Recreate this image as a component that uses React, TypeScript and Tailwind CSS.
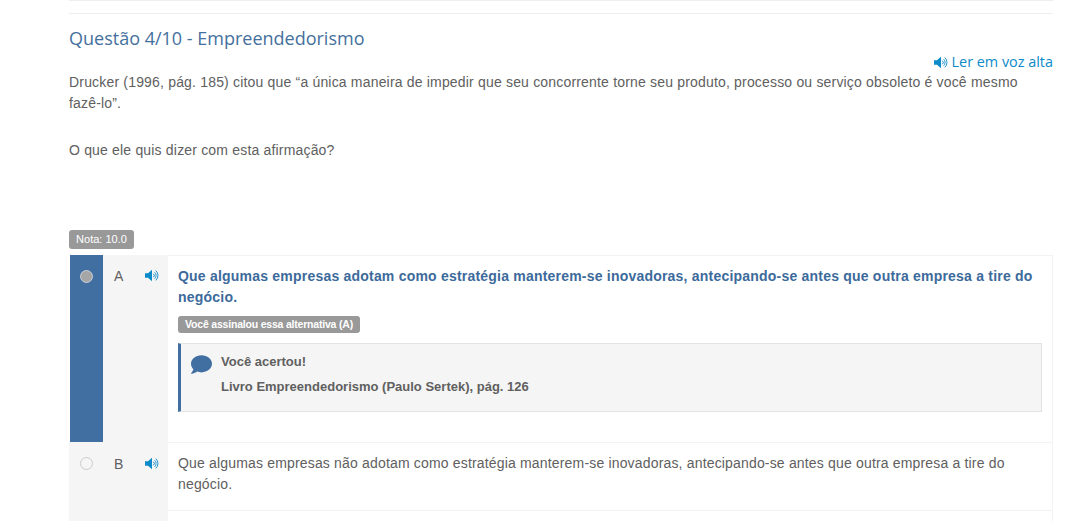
import React from "react";
import { FaComment } from "react-icons/fa";

const IconeAudio = ({ className }: { className?: string }) => {
  return (
    <svg viewBox="0 0 14 13" className={className} fill="none" stroke="currentColor">
      <path d="M0 4.3H3L7 .8V12.2L3 8.7H0Z" fill="currentColor" stroke="none" />
      <path d="M8.4 4.8a2.2 2.2 0 0 1 0 3.4" strokeWidth="1" />
      <path d="M9.6 3.2a4.4 4.4 0 0 1 0 6.6" strokeWidth="0.9" />
      <path d="M10.8 1.6a6.6 6.6 0 0 1 0 9.8" strokeWidth="0.9" />
    </svg>
  );
};

const Alternativa = ({ letra, texto }: { letra: string; texto: string }) => {
  return (
    <div className="flex bg-white">
      <div className="flex w-[99px] shrink-0 bg-[#f5f5f5] pt-[15px]">
        <div className="w-[34px] pl-[11px]">
          <div className="h-[13px] w-[13px] rounded-full border border-[#ccc]"></div>
        </div>
        <span className="w-[42px] pl-[11px] text-[14px] leading-[15px] text-[#606060]">{letra}</span>
        <IconeAudio className="h-[13px] w-[14px] text-[#0b8ac9]" />
      </div>
      <div className="h-[68px] flex-1 border-t border-r border-[#f3f3f3] px-[10px] pt-[10px]">
        <p className="text-[14px] leading-[21px] tracking-[0.17px] text-[#606060]">{texto}</p>
      </div>
    </div>
  );
};

const App = () => {
  return (
    <div className="h-[521px] w-[1072px] overflow-hidden bg-white px-[69px] font-['Liberation_Sans',Arial,sans-serif]">
      <div className="w-[984px]">
        <div className="h-[14px] border-t border-b border-[#eee]"></div>
        <h3 className="mt-[13px] font-['Open_Sans',sans-serif] text-[18px] leading-[23px] text-[#44709d]">
          Questão 4/10 - Empreendedorismo
        </h3>
        <div className="flex h-[22px] items-center justify-end gap-[4px] pt-[2px] font-['Open_Sans',sans-serif] text-[14.4px] text-[#0b8ac9]">
          <IconeAudio className="h-[13px] w-[14px]" />
          <span>Ler em voz alta</span>
        </div>
        <div className="h-[158px] text-[14px] leading-[21px] tracking-[0.18px] text-[#606060]">
          <p>
            Drucker (1996, pág. 185) citou que “a única maneira de impedir que seu concorrente torne seu produto,
            processo ou serviço obsoleto é você mesmo
            <br />
            fazê-lo”.
          </p>
          <p className="mt-[26px]">O que ele quis dizer com esta afirmação?</p>
        </div>
        <span className="block h-[19px] w-[65px] rounded-[3px] bg-[#999] text-center text-[11px] leading-[19px] text-white">
          Nota: 10.0
        </span>
        <div className="mt-[6px] flex flex-col">
          <div className="flex h-[187px] bg-white">
            <div className="ml-[1px] w-[33px] shrink-0 bg-[#416fa1] pt-[15px] pl-[10px]">
              <div className="h-[13px] w-[13px] rounded-full border border-[#c9d0d8] bg-[#a6a6a6]"></div>
            </div>
            <div className="flex w-[65px] shrink-0 bg-[#f5f5f5] pt-[14px]">
              <span className="w-[42px] pl-[11px] text-[14px] leading-[15px] text-[#606060]">A</span>
              <IconeAudio className="h-[13px] w-[14px] text-[#0b8ac9]" />
            </div>
            <div className="flex-1 border-t border-r border-[#f3f3f3] px-[10px] pt-[10px]">
              <p className="text-[14px] leading-[20.5px] font-bold tracking-[0.21px] text-[#3c6a9b]">
                Que algumas empresas adotam como estratégia manterem-se inovadoras, antecipando-se antes que outra
                empresa a tire do negócio.
              </p>
              <span className="mt-[9px] block h-[17px] w-[182px] rounded-[3px] bg-[#999] text-center text-[10.5px] leading-[17px] font-bold tracking-[-0.2px] text-white">
                Você assinalou essa alternativa (A)
              </span>
              <div className="mt-[10px] flex h-[69px] border border-l-[3px] border-[#e3e3e3] border-l-[#416fa1] bg-[#f5f5f5] pt-[8px] pl-[10px]">
                <FaComment className="mt-[2px] mr-[9px] text-[21px] text-[#416fa1]" />
                <div className="text-[13px] font-bold text-[#606060]">
                  <p className="leading-[20px]">Você acertou!</p>
                  <p className="mt-[5px] leading-[20px]">Livro Empreendedorismo (Paulo Sertek), pág. 126</p>
                </div>
              </div>
            </div>
          </div>
          <Alternativa
            letra="B"
            texto="Que algumas empresas não adotam como estratégia manterem-se inovadoras, antecipando-se antes que outra empresa a tire do negócio."
          />
          <div className="flex h-[20px] bg-white">
            <div className="w-[99px] shrink-0 bg-[#f5f5f5]"></div>
            <div className="flex-1 border-t border-r border-[#f3f3f3]"></div>
          </div>
        </div>
      </div>
    </div>
  );
};

export default App;
